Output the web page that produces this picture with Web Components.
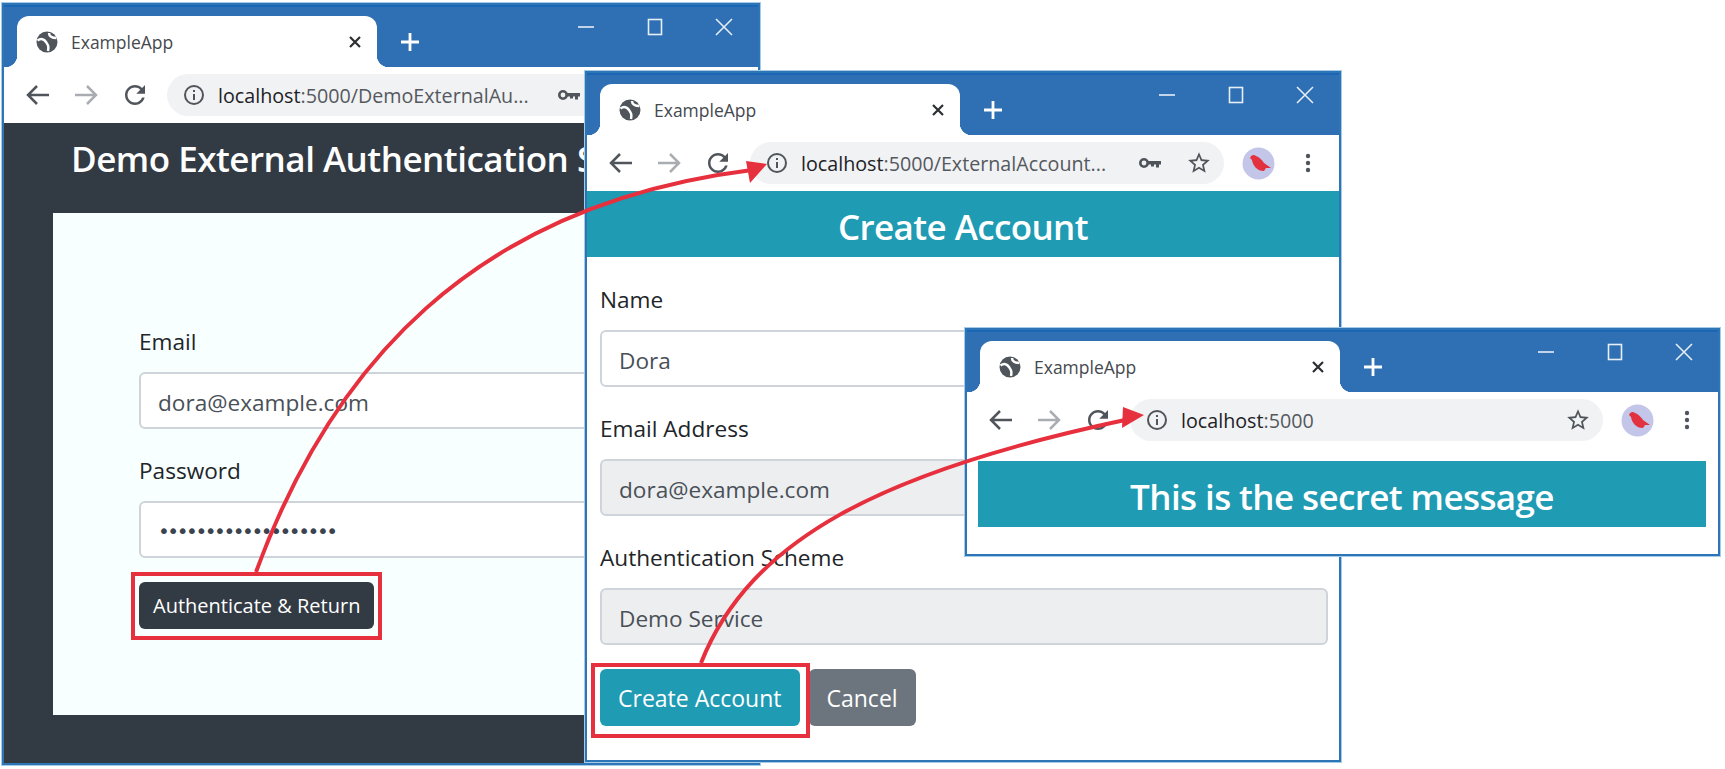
<!DOCTYPE html>
<html>
<head>
<meta charset="utf-8">
<title>ExampleApp</title>
<style>
    html, body { margin: 0; padding: 0; background: #fff; }
    body { font-family: "Open Sans", "Noto Sans", sans-serif; color: #212529; }
</style>
</head>
<body>
<desktop-canvas>
    <browser-window style="left:2px;top:3px;width:758px;height:762px" url-host="localhost" url-path=":5000/DemoExternalAu..." show-key>
        <form-panel heading="Demo External Authentication Service">
            <form-field label="Email" value="dora@example.com"></form-field>
            <form-field label="Password" value="•••••••••••••••••••" dots></form-field>
            <action-button variant="dark">Authenticate &amp; Return</action-button>
        </form-panel>
    </browser-window>
    <browser-window style="left:585px;top:71px;width:756px;height:691px" url-host="localhost" url-path=":5000/ExternalAccount..." show-key>
        <banner-heading>Create Account</banner-heading>
        <account-form>
            <form-field label="Name" value="Dora"></form-field>
            <form-field label="Email Address" value="dora@example.com" disabled></form-field>
            <form-field label="Authentication Scheme" value="Demo Service" disabled></form-field>
            <action-button slot="actions" variant="teal">Create Account</action-button>
            <action-button slot="actions" variant="grey">Cancel</action-button>
        </account-form>
    </browser-window>
    <browser-window style="left:965px;top:328px;width:755px;height:228px" url-host="localhost" url-path=":5000">
        <secret-message>This is the secret message</secret-message>
    </browser-window>
    <callout-layer></callout-layer>
</desktop-canvas>

<script>
const icons = {
    globe: `<svg width="22" height="22" viewBox="0 0 22 22" fill="none"><circle cx="11" cy="11" r="10.5" fill="#50555b"/><path d="M1.500 9.500C5 7 8 8 10 11s3 4 2 9M13 2c0 3 3 5 7.500 5" stroke="#fff" stroke-width="2.500"/></svg>`,
    back: `<svg width="28" height="28" viewBox="0 0 28 28" fill="none" stroke="#50555b" stroke-width="2.500"><path d="M25 14H4M13 5l-9 9 9 9"/></svg>`,
    forward: `<svg width="28" height="28" viewBox="0 0 28 28" fill="none" stroke="#a9adb2" stroke-width="2.500"><path d="M3 14h21M15 5l9 9-9 9"/></svg>`,
    reload: `<svg width="30" height="30" viewBox="0 0 24 24" fill="#50555b"><path d="M17.650 6.350C16.200 4.900 14.210 4 12 4c-4.420 0-7.990 3.580-7.990 8s3.570 8 7.990 8c3.730 0 6.840-2.550 7.730-6h-2.080c-.82 2.330-3.040 4-5.650 4-3.310 0-6-2.690-6-6s2.690-6 6-6c1.660 0 3.140.69 4.220 1.780L13 11h7V4l-2.350 2.350z"/></svg>`,
    info: `<svg width="22" height="22" viewBox="0 0 22 22" fill="none"><circle cx="11" cy="11" r="9" stroke="#50555b" stroke-width="2"/><rect x="10" y="10" width="2" height="6" fill="#50555b"/><rect x="10" y="6" width="2" height="2" fill="#50555b"/></svg>`,
    key: `<svg width="24" height="14" viewBox="0 0 24 14" fill="none"><circle cx="6" cy="7" r="3.700" stroke="#50555b" stroke-width="2.600"/><path d="M10 5h13v3.500h-2v3h-3v-3h-2v2h-3v-2h-3z" fill="#50555b"/></svg>`,
    star: `<svg width="26" height="26" viewBox="0 0 24 24" fill="#50555b"><path d="M22 9.240l-7.190-.62L12 2 9.190 8.630 2 9.240l5.460 4.730L5.820 21 12 17.270 18.180 21l-1.630-7.030L22 9.240zM12 15.400l-3.760 2.270 1-4.280-3.320-2.880 4.380-.38L12 6.100l1.710 4.040 4.380.38-3.320 2.880 1 4.280L12 15.400z"/></svg>`,
    avatar: `<svg width="33" height="33" viewBox="0 0 33 33"><circle cx="16.500" cy="16.500" r="16" fill="#c3c6e8"/><path d="M8 11C9 8 12 7 14 9c3 1 6 4 8 7l7 5h-5l-2 3c-7 0-11-5-12-11z" fill="#e2313f"/></svg>`,
    kebab: `<svg width="6" height="22" viewBox="0 0 6 22" fill="#50555b"><circle cx="3" cy="4" r="2.200"/><circle cx="3" cy="11" r="2.200"/><circle cx="3" cy="18" r="2.200"/></svg>`,
    tabClose: `<svg width="14" height="14" viewBox="0 0 14 14" stroke="#2b2f33" stroke-width="2.200"><path d="M2 2l10 10M12 2L2 12"/></svg>`,
    plus: `<svg width="20" height="20" viewBox="0 0 20 20" stroke="#fff" stroke-width="2.800"><path d="M10 1v18M1 10h18"/></svg>`,
    min: `<svg width="18" height="18" viewBox="0 0 18 18" stroke="#e6eef7" stroke-width="1.600"><path d="M1 9h16"/></svg>`,
    max: `<svg width="18" height="18" viewBox="0 0 18 18" fill="none" stroke="#e6eef7" stroke-width="1.600"><rect x="2.500" y="1.500" width="13" height="15"/></svg>`,
    close: `<svg width="18" height="18" viewBox="0 0 18 18" stroke="#e6eef7" stroke-width="1.600"><path d="M1 1l16 16M17 1L1 17"/></svg>`
};

class DesktopCanvas extends HTMLElement {
    constructor () {
        super();
        this.attachShadow({ mode: 'open' }).innerHTML = `
            <style>
                :host { display: block; position: relative; width: 1725px; height: 769px; overflow: hidden; background: #fff; }
            </style>
            <slot></slot>`;
    }
}

class BrowserWindow extends HTMLElement {
    constructor () {
        super();
        const root = this.attachShadow({ mode: 'open' });
        const key = this.hasAttribute('show-key') ? `<span class="key">${icons.key}</span>` : '';
        root.innerHTML = `
            <style>
                :host {
                    display: flex; flex-direction: column; position: absolute; box-sizing: border-box;
                    background: #fff; border: 2px solid #2e75b6; outline: 1px solid #a5cbe8;
                    font-family: "Open Sans", "Noto Sans", sans-serif; overflow: hidden;
                }
                .strip { position: relative; height: 62px; flex: none; background: #2f6fb3; border-top: 2px solid #1c66b6; box-sizing: border-box; }
                .tab {
                    position: absolute; left: 13px; top: 9px; bottom: 0; width: 360px;
                    background: #fff; border-radius: 12px 12px 0 0;
                    display: flex; align-items: center; padding: 0 15px 0 19px; box-sizing: border-box;
                }
                .tab::before, .tab::after {
                    content: ""; position: absolute; bottom: 0; width: 12px; height: 12px;
                }
                .tab::before { left: -12px; background: radial-gradient(circle at 0 0, #2f6fb3 12px, #fff 12.500px); }
                .tab::after { right: -12px; background: radial-gradient(circle at 100% 0, #2f6fb3 12px, #fff 12.500px); }
                .title { margin-left: 13px; font-size: 17.500px; color: #45494e; flex: 1; }
                .tab svg, .controls svg, .plus svg, .nav svg { display: block; }
                .plus { position: absolute; left: 396px; top: 25px; }
                .controls { position: absolute; right: 25px; top: 11px; display: flex; gap: 51px; }
                .nav {
                    height: 56px; flex: none; display: flex; align-items: center; box-sizing: border-box;
                    padding: 0 28px 0 20px;
                }
                .btns { display: flex; align-items: center; gap: 20px; width: 143px; flex: none; }
                .pill {
                    flex: 1; height: 42px; border-radius: 21px; background: #f1f2f4;
                    display: flex; align-items: center; padding: 0 12px 0 16px; min-width: 0;
                }
                .url { margin-left: 13px; font-size: 19.700px; color: #55595e; flex: 1; white-space: nowrap; }
                .url b { font-weight: 400; color: #202124; }
                .key { margin-right: 24px; }
                .avatar { margin: 0 30px 0 18px; }
                .body { flex: 1; min-height: 0; display: flex; flex-direction: column; }
            </style>
            <div class="strip">
                <div class="tab">
                    ${icons.globe}
                    <span class="title">ExampleApp</span>
                    ${icons.tabClose}
                </div>
                <span class="plus">${icons.plus}</span>
                <div class="controls">${icons.min}${icons.max}${icons.close}</div>
            </div>
            <div class="nav">
                <div class="btns">${icons.back}${icons.forward}${icons.reload}</div>
                <div class="pill">
                    ${icons.info}
                    <span class="url"><b>${this.getAttribute('url-host')}</b>${this.getAttribute('url-path')}</span>
                    ${key}
                    ${icons.star}
                </div>
                <span class="avatar">${icons.avatar}</span>
                ${icons.kebab}
            </div>
            <div class="body"><slot></slot></div>`;
    }
}

class FormPanel extends HTMLElement {
    constructor () {
        super();
        this.attachShadow({ mode: 'open' }).innerHTML = `
            <style>
                :host { display: flex; flex-direction: column; flex: 1; background: #323a44; min-height: 0; }
                h1 { margin: 0; padding: 14px 0 0 67px; height: 76px; box-sizing: border-box; font-size: 35px; font-weight: 600; color: #fff; white-space: nowrap; letter-spacing: -.5px; line-height: 44px; }
                .card { background: #f8ffff; margin: 14px 50px 48px 49px; flex: 1; padding: 111px 35px 0 86px; }
            </style>
            <h1>${this.getAttribute('heading')}</h1>
            <div class="card"><slot></slot></div>`;
    }
}

class BannerHeading extends HTMLElement {
    constructor () {
        super();
        this.attachShadow({ mode: 'open' }).innerHTML = `
            <style>
                :host { display: block; height: 66px; background: #1f9bb3; color: #fff; text-align: center; font-size: 35px; font-weight: 600; line-height: 72px; letter-spacing: -.6px; }
            </style>
            <slot></slot>`;
    }
}

class AccountForm extends HTMLElement {
    constructor () {
        super();
        this.attachShadow({ mode: 'open' }).innerHTML = `
            <style>
                :host { display: block; padding: 25px 11px 0 13px; }
                .actions { display: flex; gap: 9px; margin-top: 1px; }
            </style>
            <slot></slot>
            <div class="actions"><slot name="actions"></slot></div>`;
    }
}

class FormField extends HTMLElement {
    constructor () {
        super();
        const disabled = this.hasAttribute('disabled');
        const dots = this.hasAttribute('dots');
        this.attachShadow({ mode: 'open' }).innerHTML = `
            <style>
                :host { display: block; margin-bottom: 24px; }
                label { display: block; height: 48px; font-size: 22.600px; color: #212529; line-height: 36px; }
                .input {
                    box-sizing: border-box; height: 57px; border: 2px solid #ced4da; border-radius: 6px;
                    background: ${disabled ? '#edeef0' : '#fff'}; display: flex; align-items: center; padding: 3px 17px 0;
                    font-size: 22.600px; color: #495057; white-space: nowrap;
                }
                .dots { color: #3a434e; font-family: "DejaVu Sans", sans-serif; font-size: 20px; letter-spacing: -2.450px; }
            </style>
            <label>${this.getAttribute('label')}</label>
            <div class="input"><span class="${dots ? 'dots' : ''}">${this.getAttribute('value')}</span></div>`;
    }
}

class ActionButton extends HTMLElement {
    constructor () {
        super();
        const colors = { dark: '#323a44', teal: '#1f9bb3', grey: '#6c757d' };
        const variant = this.getAttribute('variant');
        const small = variant === 'dark';
        this.attachShadow({ mode: 'open' }).innerHTML = `
            <style>
                :host { display: inline-block; }
                button {
                    display: block; border: none; color: #fff; background: ${colors[variant]};
                    border-radius: 6px; font-family: inherit;
                    height: ${small ? 47 : 57}px; font-size: ${small ? 20 : 23}px;
                    padding: 0 ${small ? 14 : 18}px;
                }
            </style>
            <button><slot></slot></button>`;
    }
}

class SecretMessage extends HTMLElement {
    constructor () {
        super();
        this.attachShadow({ mode: 'open' }).innerHTML = `
            <style>
                :host { display: block; margin: 13px 12px 0 11px; height: 66px; background: #1f9bb3; color: #fff; text-align: center; font-size: 35px; font-weight: 600; line-height: 71px; letter-spacing: -.6px; }
            </style>
            <slot></slot>`;
    }
}

class CalloutLayer extends HTMLElement {
    constructor () {
        super();
        this.attachShadow({ mode: 'open' }).innerHTML = `
            <style>
                :host { display: block; position: absolute; left: 0; top: 0; width: 1725px; height: 769px; pointer-events: none; }
                svg { display: block; }
                .box, .line { fill: none; stroke: #e6303e; stroke-width: 4; }
                .head { fill: #e6303e; }
            </style>
            <svg width="1725" height="769" viewBox="0 0 1725 769">
                <rect class="box" x="133" y="574" width="247" height="64"/>
                <rect class="box" x="593" y="665" width="215" height="71"/>
                <path class="line" d="M256 572C330 370 470 205 752 170"/>
                <path class="head" d="M767 164L746 161L750 183z"/>
                <path class="line" d="M701 663C750 540 880 472 1125 420"/>
                <path class="head" d="M1144 415L1123 407L1122 428z"/>
            </svg>`;
    }
}

customElements.define('desktop-canvas', DesktopCanvas);
customElements.define('browser-window', BrowserWindow);
customElements.define('form-panel', FormPanel);
customElements.define('banner-heading', BannerHeading);
customElements.define('account-form', AccountForm);
customElements.define('form-field', FormField);
customElements.define('action-button', ActionButton);
customElements.define('secret-message', SecretMessage);
customElements.define('callout-layer', CalloutLayer);
</script>
</body>
</html>
